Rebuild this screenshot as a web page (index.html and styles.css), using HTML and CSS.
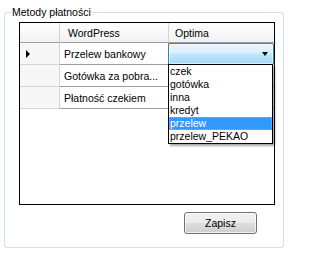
FILE: index.html
```html
<!DOCTYPE html>
<html>
<head>
<meta charset="utf-8">
<link rel="stylesheet" href="styles.css">
</head>
<body>
<div class="group">
  <span class="caption">Metody płatności</span>
  <div class="grid">
    <div class="row head">
      <div class="c rh"></div>
      <div class="c wp">WordPress</div>
      <div class="c op">Optima</div>
    </div>
    <div class="row">
      <div class="c rh"><span class="arrow"></span></div>
      <div class="c wp">Przelew bankowy</div>
      <div class="c op edit">
        <div class="combo"><span class="down"></span></div>
      </div>
    </div>
    <div class="row">
      <div class="c rh"></div>
      <div class="c wp">Gotówka za pobra...</div>
      <div class="c op"></div>
    </div>
    <div class="row">
      <div class="c rh"></div>
      <div class="c wp">Płatność czekiem</div>
      <div class="c op"></div>
    </div>
    <ul class="list">
      <li>czek</li>
      <li>gotówka</li>
      <li>inna</li>
      <li>kredyt</li>
      <li class="sel">przelew</li>
      <li>przelew_PEKAO</li>
    </ul>
  </div>
  <div class="actions">
    <button class="btn">Zapisz</button>
  </div>
</div>
</body>
</html>
```

FILE: styles.css
```css
* { box-sizing: border-box; }
html, body {
  margin: 0;
  padding: 0;
  background: #ffffff;
  font-family: "Liberation Sans", Arial, sans-serif;
  font-size: 10.5px;
  color: #000;
}
.group {
  position: relative;
  margin: 12px 0 0 4px;
  width: 280px;
  height: 236px;
  border: 1px solid #d5dfe5;
  border-radius: 3px;
  box-shadow: inset 1px 1px 0 #ffffff;
  padding: 9px 0 0 14px;
}
.caption {
  position: absolute;
  top: -7px;
  left: 6px;
  padding: 0 1px;
  line-height: 12px;
  background: #ffffff;
  color: #000;
}
.grid {
  position: relative;
  width: 256px;
  height: 183px;
  border: 1px solid #000;
  background: #ffffff;
}
.row {
  display: flex;
  height: 22px;
}
.row.head {
  height: 20px;
}
.c {
  display: flex;
  align-items: center;
  height: 100%;
  white-space: nowrap;
  overflow: hidden;
}
.rh {
  width: 40px;
  background: #f7f7f7;
  border-right: 1px solid #d5d5d5;
  border-bottom: 1px solid #d5d5d5;
  padding-left: 6px;
}
.wp {
  width: 109px;
  border-right: 1px solid #a0a0a0;
  border-bottom: 1px solid #a0a0a0;
  padding-left: 4px;
}
.op {
  width: 105px;
  border-bottom: 1px solid #a0a0a0;
  padding-left: 6px;
}
.head .c {
  background: linear-gradient(#ffffff, #f7f8fa 50%, #f0f1f2);
  border-bottom: 1px solid #a0a0a0;
  color: #000;
}
.head .rh { border-right: 1px solid #d5d5d5; }
.head .wp { border-right: 1px solid #d5d5d5; padding-left: 8px; }
.head .op { padding-left: 6px; }
.arrow {
  width: 0;
  height: 0;
  border-top: 4px solid transparent;
  border-bottom: 4px solid transparent;
  border-left: 4px solid #000;
}
.op.edit {
  padding: 0;
  border-bottom: none;
  overflow: visible;
}
.combo {
  width: 106px;
  height: 22px;
  margin-left: -1px;
  border: 1px solid #3c7fb1;
  border-radius: 2px;
  background: linear-gradient(#eaf6fd, #d9f0fc 45%, #bee6fd 50%, #a7d9f5);
  box-shadow: inset 0 0 0 1px rgba(255,255,255,0.6);
  display: flex;
  align-items: center;
  justify-content: flex-end;
  padding-right: 5px;
}
.down {
  width: 0;
  height: 0;
  border-left: 3.5px solid transparent;
  border-right: 3.5px solid transparent;
  border-top: 4px solid #000;
}
.list {
  position: absolute;
  top: 41px;
  left: 148px;
  width: 105px;
  height: 80px;
  margin: 0;
  padding: 0;
  list-style: none;
  background: #ffffff;
  border: 1px solid #000;
  box-shadow: 2px 2px 2px rgba(0,0,0,0.35);
}
.list li {
  height: 13px;
  line-height: 13px;
  padding-left: 1px;
  white-space: nowrap;
}
.list li.sel {
  background: #3399ff;
  color: #ffffff;
  outline: 1px dotted #f0a040;
  outline-offset: -1px;
}
.actions {
  display: flex;
  justify-content: flex-end;
  padding-right: 26px;
  margin-top: 7px;
}
.btn {
  width: 73px;
  height: 22px;
  margin: 0;
  padding: 0;
  font-family: "Liberation Sans", Arial, sans-serif;
  font-size: 10.5px;
  color: #000;
  border: 1px solid #707070;
  border-radius: 3px;
  background: linear-gradient(#f2f2f2, #ebebeb 50%, #dddddd 51%, #cfcfcf);
  box-shadow: inset 0 0 0 1px rgba(255,255,255,0.7);
}
```
